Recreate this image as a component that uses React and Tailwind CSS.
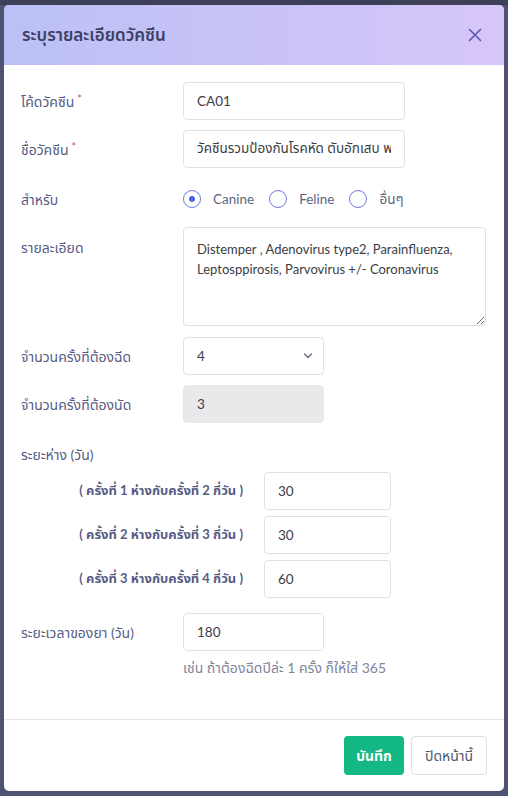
import { useState } from "react";

const FONT = { fontFamily: 'Lato, "Noto Sans", "Noto Sans Thai", "Liberation Sans", sans-serif' };

const INTERVALS = [
  { label: "( ครั้งที่ 1 ห่างกับครั้งที่ 2 กี่วัน )", value: "30" },
  { label: "( ครั้งที่ 2 ห่างกับครั้งที่ 3 กี่วัน )", value: "30" },
  { label: "( ครั้งที่ 3 ห่างกับครั้งที่ 4 กี่วัน )", value: "60" },
];

const SPECIES = ["Canine", "Feline", "อื่นๆ"];

// base field look, background set per field
const fieldCls =
  "h-[38px] rounded-[4px] border px-[13px] text-[13.5px] text-[#3c3d44] outline-none";
const inputCls = `${fieldCls} border-[#dfe1e8] bg-white`;

const Label = ({ children, required }) => (
  <div className="w-[162px] shrink-0 text-[14px] text-[#575c84]">
    {children}
    {required && <span className="ml-[3px] align-top text-[11px] text-[#e5484d]">*</span>}
  </div>
);

const Radio = ({ checked, label, onClick }) => (
  <button type="button" onClick={onClick} className="flex items-center gap-[12px]">
    <span className="flex h-[18px] w-[18px] items-center justify-center rounded-full border border-[#6f7bd8] bg-white">
      {checked && <span className="h-[6px] w-[6px] rounded-full bg-[#4c68e6]" />}
    </span>
    <span className="text-[13.5px] text-[#60657f]">{label}</span>
  </button>
);

export default function App() {
  const [species, setSpecies] = useState("Canine");

  return (
    <div style={FONT} className="flex min-h-[796px] w-[508px] flex-col bg-[#4f5272]">
      <div className="h-[5px] bg-[#3e405a]" />
      <div className="mx-[4px] flex flex-col overflow-hidden rounded-[5px] bg-white">
        {/* Header */}
        <div className="flex h-[60px] items-center justify-between bg-gradient-to-r from-[#bbc0f6] to-[#d7c6f8] pl-[18px] pr-[22px]">
          <h5 className="text-[17px] font-semibold text-[#3d4064]">ระบุรายละเอียดวัคซีน</h5>
          <svg width="14" height="14" viewBox="0 0 14 14" className="text-[#5d57b6]">
            <path d="M1.5 1.5 L12.5 12.5 M12.5 1.5 L1.5 12.5" stroke="currentColor" strokeWidth="1.7" strokeLinecap="round" />
          </svg>
        </div>

        {/* Body */}
        <div className="flex flex-col px-[17px] pb-[41px] pt-[17px]">
          <div className="flex items-center">
            <Label required>โค้ดวัคซีน</Label>
            <input className={`${inputCls} w-[222px]`} defaultValue="CA01" />
          </div>

          <div className="mt-[10px] flex items-center">
            <Label required>ชื่อวัคซีน</Label>
            <input className={`${inputCls} w-[222px]`} defaultValue="วัคซีนรวมป้องกันโรคหัด ตับอักเสบ พาราอินฟลูเอนซา" />
          </div>

          <div className="mt-[20px] flex h-[22px] items-center">
            <Label>สำหรับ</Label>
            <div className="flex items-center gap-[15px]">
              {SPECIES.map((s) => (
                <Radio key={s} label={s} checked={species === s} onClick={() => setSpecies(s)} />
              ))}
            </div>
          </div>

          <div className="mt-[17px] flex items-start">
            <div className="pt-[10px]">
              <Label>รายละเอียด</Label>
            </div>
            <textarea
              className="h-[99px] w-[303px] resize-y rounded-[4px] border border-[#dfe1e8] px-[13px] pt-[11px] text-[13px] leading-[20px] text-[#3c3d44] outline-none"
              defaultValue="Distemper , Adenovirus type2, Parainfluenza, Leptosppirosis, Parvovirus +/- Coronavirus"
            />
          </div>

          <div className="mt-[11px] flex items-center">
            <Label>จำนวนครั้งที่ต้องฉีด</Label>
            <div className={`${inputCls} flex w-[141px] items-center justify-between pr-[10px]`}>
              <span>4</span>
              <svg width="10" height="6" viewBox="0 0 10 6">
                <path d="M1.5 1 L5 4.5 L8.5 1" fill="none" stroke="#6b6f80" strokeWidth="1.5" strokeLinecap="round" strokeLinejoin="round" />
              </svg>
            </div>
          </div>

          <div className="mt-[10px] flex items-center">
            <Label>จำนวนครั้งที่ต้องนัด</Label>
            <div className={`${fieldCls} flex w-[141px] items-center border-[#e9e9ec] bg-[#e9e9ec]`}>3</div>
          </div>

          <div className="mt-[22px] text-[14px] leading-[20px] text-[#575c84]">ระยะห่าง (วัน)</div>

          <div className="mt-[7px] flex flex-col gap-[6px]">
            {INTERVALS.map((row) => (
              <div key={row.label} className="flex items-center">
                <div className="w-[243px] shrink-0 pr-[21px] text-right text-[13px] font-bold text-[#575c84]">
                  {row.label}
                </div>
                <input className={`${inputCls} w-[127px]`} defaultValue={row.value} />
              </div>
            ))}
          </div>

          <div className="mt-[15px] flex items-center">
            <Label>ระยะเวลาของยา (วัน)</Label>
            <input className={`${inputCls} w-[141px]`} defaultValue="180" />
          </div>
          <div className="ml-[162px] mt-[7px] text-[14px] leading-[20px] text-[#81859a]">
            เช่น ถ้าต้องฉีดปีล่ะ 1 ครั้ง ก็ให้ใส่ 365
          </div>
        </div>

        {/* Footer */}
        <div className="flex justify-end gap-[7px] border-t border-[#e6e7ec] px-[17px] py-[16px]">
          <button className="h-[39px] w-[60px] rounded-[4px] bg-[#13b884] text-[14px] font-bold text-white">
            บันทึก
          </button>
          <button className="h-[39px] w-[76px] rounded-[4px] border border-[#dcdfe6] bg-white text-[14px] text-[#51566e]">
            ปิดหน้านี้
          </button>
        </div>
      </div>
    </div>
  );
}
